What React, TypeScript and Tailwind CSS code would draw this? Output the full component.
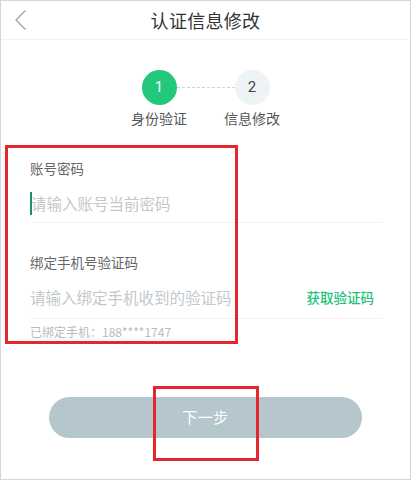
import React from "react";

export default function App() {
  return (
    <div className="relative w-[411px] h-[480px] bg-white border border-[#d6d6d6] overflow-hidden font-['Noto_Sans_CJK_SC','Noto_Sans',sans-serif]">
      {/* header */}
      <div className="relative h-[39px] border-b border-[#f2f2f2] flex items-center justify-center">
        <svg
          className="absolute left-[13px] top-[9px]"
          width="13"
          height="20"
          viewBox="0 0 13 20"
          fill="none"
        >
          <path d="M11 1 L2 10 L11 19" stroke="#a8a8a8" strokeWidth="1.5" strokeLinecap="round" strokeLinejoin="round" />
        </svg>
        <span className="text-[18px] leading-none text-[#333] tracking-[0.3px]">认证信息修改</span>
      </div>

      {/* steps */}
      <div className="mt-[30px] flex justify-center items-start">
        <div className="flex flex-col items-center w-[35px]">
          <div className="w-[35px] h-[35px] rounded-full bg-[#22c97b] flex items-center justify-center text-white text-[14px] font-['Roboto',sans-serif]">
            1
          </div>
          <span className="mt-[3px] whitespace-nowrap text-[14px] leading-[20px] text-[#555]">身份验证</span>
        </div>
        <div className="w-[58px] h-[35px] flex items-center">
          <div className="w-full border-t border-dashed border-[#cfd4d8]" />
        </div>
        <div className="flex flex-col items-center w-[35px]">
          <div className="w-[35px] h-[35px] rounded-full bg-[#eef3f6] flex items-center justify-center text-[#444] text-[15px] font-['Roboto',sans-serif]">
            2
          </div>
          <span className="mt-[3px] whitespace-nowrap text-[14px] leading-[20px] text-[#555]">信息修改</span>
        </div>
      </div>

      {/* form */}
      <div className="mt-[30px] pl-[29px] pr-[28px]">
        <div className="text-[13.5px] leading-[20px] text-[#666]">账号密码</div>
        <div className="mt-[14px] flex items-center h-[22px]">
          <span className="w-[2px] h-[23px] bg-[#1a8f6c] mr-[-1px]" />
          <span className="text-[15.5px] leading-[22px] text-[#c3c8cc]">请输入账号当前密码</span>
        </div>
        <div className="mt-[8px] border-b border-[#f1f1f1]" />

        <div className="mt-[29px] text-[13.5px] leading-[20px] text-[#666]">绑定手机号验证码</div>
        <div className="mt-[14px] flex items-center justify-between h-[22px] pr-[8px]">
          <span className="text-[15.5px] leading-[22px] text-[#c3c8cc]">请输入绑定手机收到的验证码</span>
          <span className="text-[13.5px] leading-[22px] text-[#22c27a] font-medium">获取验证码</span>
        </div>
        <div className="mt-[10px] border-b border-[#f1f1f1]" />
        <div className="mt-[5px] text-[12px] leading-[16px] text-[#b8bcc0]">已绑定手机：188****1747</div>
      </div>

      {/* button */}
      <div className="mt-[57px] flex justify-center">
        <div className="w-[313px] h-[41px] rounded-full bg-[#b6c6cd] flex items-center justify-center text-white text-[15px] tracking-[0.5px]">
          下一步
        </div>
      </div>

      {/* annotation boxes */}
      <div className="absolute left-[4px] top-[144px] w-[233px] h-[199px] border-[3px] border-[#e5262f]" />
      <div className="absolute left-[152px] top-[385px] w-[106px] h-[75px] border-[3px] border-[#e5262f]" />
    </div>
  );
}
